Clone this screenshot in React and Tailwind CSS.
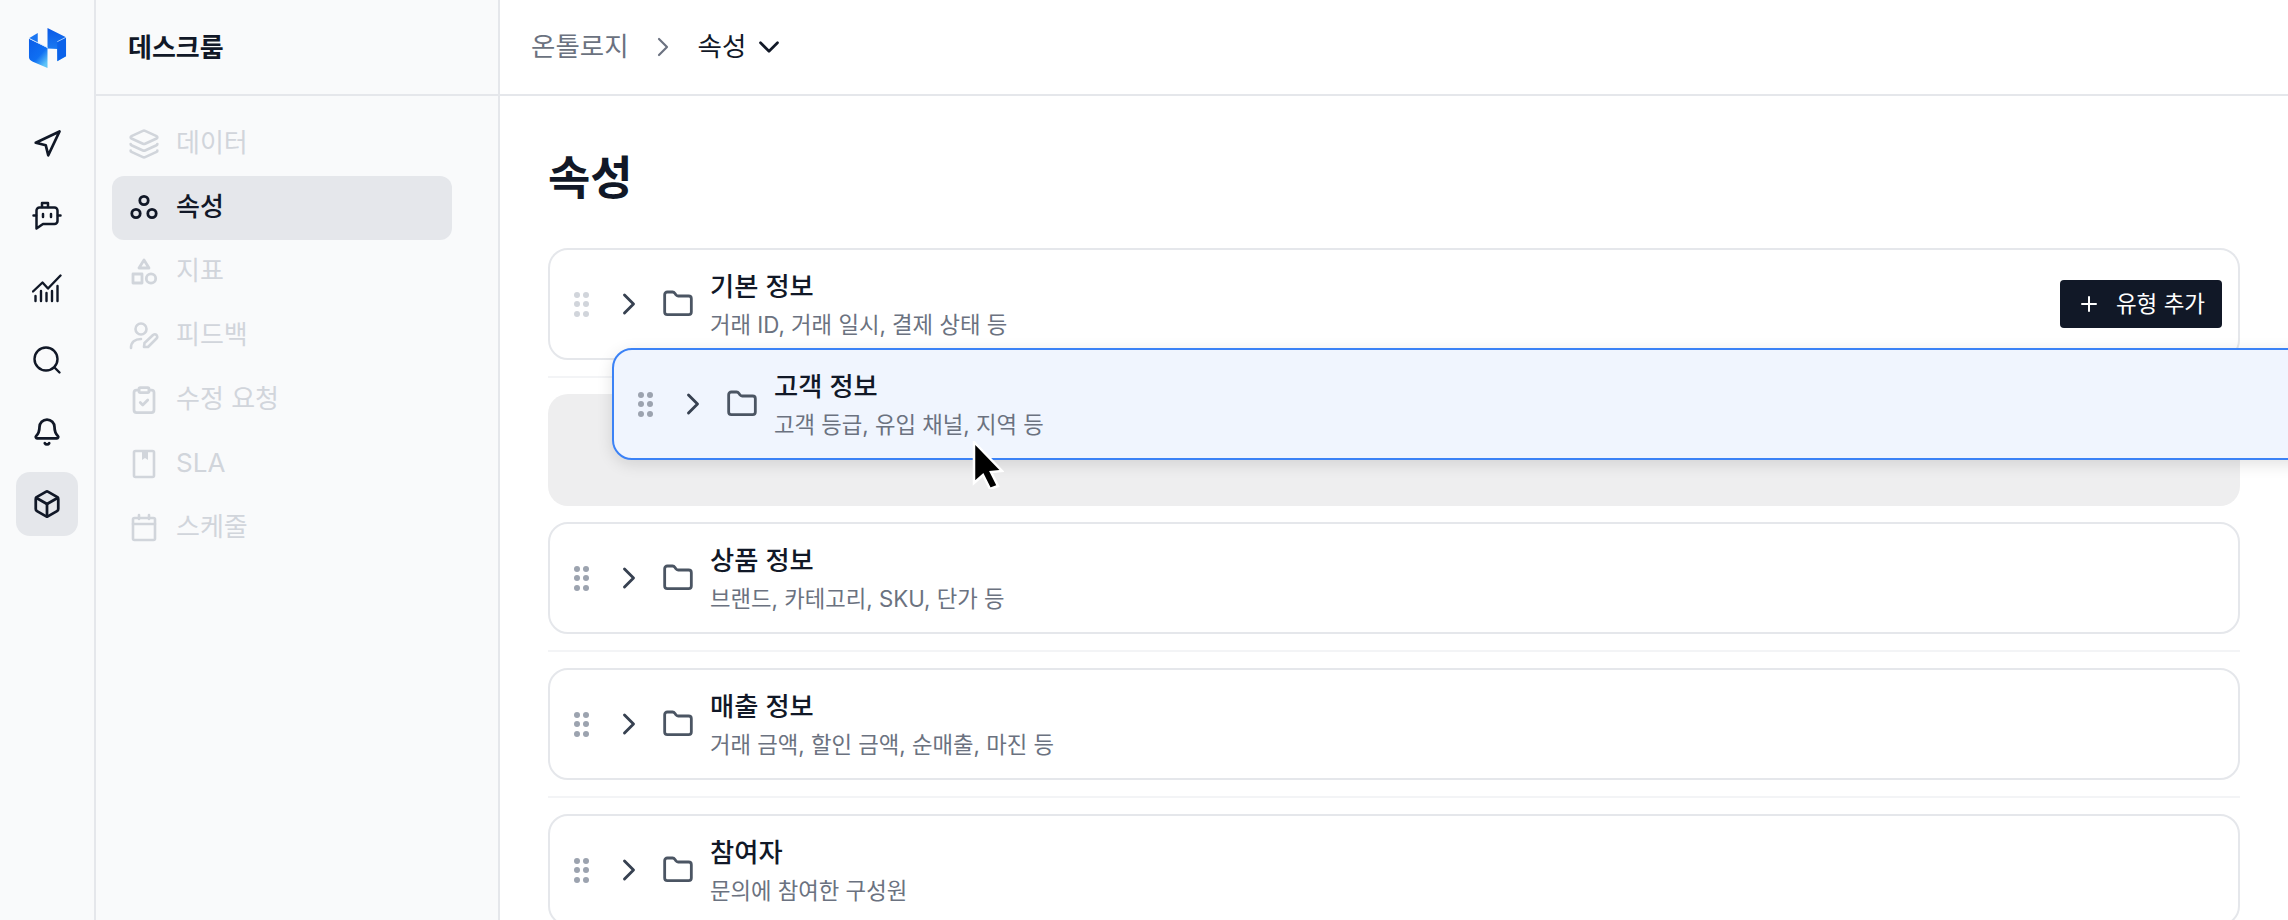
import React from 'react';
import { Navigation, Bell, Box, Layers, ClipboardCheck, ChevronRight, ChevronDown, Folder, Plus } from 'lucide-react';

const FONT = "font-['Inter','Noto_Sans_CJK_KR',sans-serif]";

function Logo() {
  return (
    <svg width="39" height="41" viewBox="0 0 40 42">
      <defs>
        <linearGradient id="logoA" x1="0" y1="0" x2="0.7" y2="1">
          <stop offset="0" stopColor="#0b5ce8" />
          <stop offset="0.65" stopColor="#0f6ff2" />
          <stop offset="1" stopColor="#5fc4f8" />
        </linearGradient>
        <linearGradient id="logoB" x1="0" y1="0" x2="0" y2="1">
          <stop offset="0" stopColor="#0a58e6" />
          <stop offset="0.6" stopColor="#1a78f0" />
          <stop offset="1" stopColor="#7fd4f8" />
        </linearGradient>
      </defs>
      <path d="M1 11 L20 20.5 V41 L5 34.5 Q1 33 1 30 Z" fill="url(#logoA)" />
      <path d="M1 10.5 L10 5 V15 Z" fill="#1b76f2" />
      <path d="M20 0 L39 9.5 V29 L30 34 V21.5 L20 21 Z" fill="url(#logoB)" />
      <path d="M30 14 L39 9.5 V29 L30 34 Z" fill="#0b62ea" />
      <path d="M30 14 L39 9.5 M1 10.5 L20 20" stroke="#cfe6ff" strokeWidth="0.8" fill="none" />
    </svg>
  );
}

function BotIcon() {
  return (
    <svg width="30" height="30" viewBox="0 0 30 30" fill="none" stroke="currentColor" strokeWidth="2.5" strokeLinecap="round" strokeLinejoin="round">
      <path d="M10 6 V2 H16 V6" />
      <path d="M7.5 6.5 H22.5 A3 3 0 0 1 25.5 9.5 V20 A3 3 0 0 1 22.5 23 H11 L4.5 27.5 V9.5 A3 3 0 0 1 7.5 6.5 Z" />
      <path d="M1.5 14.5 H4 M26 14.5 H28.5 M11 13 V16 M19 13 V16" />
    </svg>
  );
}

function ChartIcon() {
  return (
    <svg width="30" height="30" viewBox="0 0 30 30" fill="none" stroke="currentColor" strokeWidth="2.4" strokeLinecap="round" strokeLinejoin="round">
      <path d="M1 18.5 L10.5 9.5 L16 15.5 L28.5 2.5" />
      <path d="M3.5 23 V28 M9 18 V28 M14.5 20 V28 M20 18 V28 M25.5 13 V28" />
    </svg>
  );
}

function SearchIcon() {
  return (
    <svg width="30" height="30" viewBox="0 0 30 30" fill="none" stroke="currentColor" strokeWidth="2.4" strokeLinecap="round">
      <circle cx="14" cy="14" r="11.5" />
      <path d="M23 23 L27.5 27.5" />
    </svg>
  );
}

function NodesIcon() {
  return (
    <svg width="30" height="30" viewBox="0 0 30 30" fill="none" stroke="currentColor" strokeWidth="2.8">
      <circle cx="15" cy="7.5" r="4.2" />
      <circle cx="7" cy="20.5" r="4.2" />
      <circle cx="23" cy="20.5" r="4.2" />
    </svg>
  );
}

function ShapesIcon() {
  return (
    <svg width="30" height="30" viewBox="0 0 30 30" fill="none" stroke="currentColor" strokeWidth="2.8" strokeLinejoin="round">
      <path d="M15 3 L20 11 H10 Z" />
      <rect x="4" y="17" width="9" height="9" />
      <circle cx="22" cy="21.5" r="4.7" />
    </svg>
  );
}

function UserEditIcon() {
  return (
    <svg width="30" height="30" viewBox="0 0 30 30" fill="none" stroke="currentColor" strokeWidth="2.6" strokeLinecap="round" strokeLinejoin="round">
      <circle cx="12" cy="8" r="5.5" />
      <path d="M2 27 C2 21 6 18 12 18" />
      <path d="M15 26 L15.5 22 L24 14 Q26 12.5 27.5 14 Q29 16 27.5 17.5 L19 26 Z" />
    </svg>
  );
}

function BookIcon() {
  return (
    <svg width="30" height="30" viewBox="0 0 30 30" fill="none" stroke="currentColor" strokeWidth="2.6" strokeLinejoin="round">
      <rect x="5" y="2" width="20" height="26" rx="1.5" />
      <path d="M13 2 H19 V11 L16 9 L13 11 Z" fill="currentColor" stroke="none" />
    </svg>
  );
}

function CalendarIcon() {
  return (
    <svg width="30" height="30" viewBox="0 0 30 30" fill="none" stroke="currentColor" strokeWidth="2.6" strokeLinecap="round" strokeLinejoin="round">
      <rect x="4" y="5" width="22" height="22" rx="1.5" />
      <path d="M4 11 H26 M10 2 V6 M20 2 V6" />
    </svg>
  );
}

function Grip({ className }) {
  return (
    <div className={`grid grid-cols-2 gap-x-[3px] gap-y-[3.5px] ${className}`}>
      {[0, 1, 2, 3, 4, 5].map((i) => (
        <span key={i} className="w-[6px] h-[6px] rounded-full bg-current" />
      ))}
    </div>
  );
}

function Cursor() {
  return (
    <svg width="32" height="48" viewBox="0 0 32 48">
      <path d="M2 1 L30 30 L19 31 L26 45 L18 48 L11 34 L2 42 Z" fill="#000" stroke="#fff" strokeWidth="2.5" strokeLinejoin="miter" />
    </svg>
  );
}

const railIcons = [
  { icon: <Navigation size={30} strokeWidth={2.2} /> },
  { icon: <BotIcon /> },
  { icon: <ChartIcon /> },
  { icon: <SearchIcon /> },
  { icon: <Bell size={30} strokeWidth={2.2} /> },
  { icon: <Box size={30} strokeWidth={2.2} />, active: true },
];

const menu = [
  { label: '데이터', icon: <Layers size={32} strokeWidth={2} /> },
  { label: '속성', icon: <NodesIcon />, active: true },
  { label: '지표', icon: <ShapesIcon /> },
  { label: '피드백', icon: <UserEditIcon /> },
  { label: '수정 요청', icon: <ClipboardCheck size={30} strokeWidth={2.2} /> },
  { label: 'SLA', icon: <BookIcon /> },
  { label: '스케줄', icon: <CalendarIcon /> },
];

function Row({ title, desc, titleColor = 'text-[#111827]', grip = 'text-[#9ca3af]' }) {
  return (
    <>
      <Grip className={`${grip} ml-[24px] w-[15px]`} />
      <ChevronRight size={36} strokeWidth={1.9} className="ml-[22px] text-[#374151]" />
      <Folder size={32} strokeWidth={2.1} className="ml-[15px] text-[#4b5563]" />
      <div className="ml-[16px] flex flex-col pt-[1px]">
        <span className={`text-[26.3px] leading-[36px] font-medium ${titleColor}`}>{title}</span>
        <span className="text-[22.3px] leading-[32px] mt-[4px] text-[#6b7280]">{desc}</span>
      </div>
    </>
  );
}

function Card({ title, desc, grip, children }) {
  return (
    <div className="h-[112px] flex items-center bg-white border-2 border-[#e5e7eb] rounded-[20px] shrink-0">
      <Row title={title} desc={desc} grip={grip} />
      {children}
    </div>
  );
}

function Separator() {
  return <div className="h-[2px] my-[16px] bg-[#f3f4f6] shrink-0" />;
}

export default function App() {
  return (
    <div className={`${FONT} w-[2288px] h-[920px] overflow-hidden flex bg-white`}>
      <aside className="w-[96px] shrink-0 bg-[#f9fafb] border-r-2 border-[#e5e7eb] flex flex-col items-center">
        <div className="h-[94px] flex items-center justify-center pt-[2px]"><Logo /></div>
        <div className="flex flex-col items-center gap-[8px] mt-[18px]">
          {railIcons.map((item, i) => (
            <div
              key={i}
              className={`w-[62px] h-[64px] rounded-[14px] flex items-center justify-center text-[#111827] ${item.active ? 'bg-[#e5e7eb]' : ''}`}
            >
              {item.icon}
            </div>
          ))}
        </div>
      </aside>

      <aside className="w-[404px] shrink-0 bg-[#f9fafb] border-r-2 border-[#e5e7eb] flex flex-col">
        <div className="h-[96px] shrink-0 border-b-2 border-[#e5e7eb] flex items-center pl-[32px] text-[26px] font-semibold text-[#111827]">
          데스크룸
        </div>
        <nav className="flex flex-col mt-[16px] pl-[16px] pr-[46px]">
          {menu.map((item) => (
            <div
              key={item.label}
              className={`h-[64px] rounded-[12px] flex items-center pl-[16px] ${item.active ? 'bg-[#e5e7eb] text-[#111827]' : 'text-[#d1d5db]'}`}
            >
              <span className="w-[32px] flex justify-center">{item.icon}</span>
              <span className={`ml-[16px] pb-[3px] text-[26px] ${item.active ? 'font-medium' : ''}`}>{item.label}</span>
            </div>
          ))}
        </nav>
      </aside>

      <main className="flex-1 min-w-0 relative flex flex-col">
        <header className="h-[96px] shrink-0 border-b-2 border-[#e5e7eb] flex items-center pl-[31px]">
          <span className="text-[26.5px] text-[#6b7280]">온톨로지</span>
          <ChevronRight size={32} strokeWidth={1.6} className="ml-[18px] text-[#6b7280]" />
          <span className="ml-[19px] text-[26.5px] text-[#111827]">속성</span>
          <ChevronDown size={34} strokeWidth={1.9} className="ml-[6px] text-[#111827]" />
        </header>

        <div className="flex flex-col pl-[48px] pr-[48px]">
          <h1 className="mt-[57px] h-[48px] leading-[48px] text-[46px] font-bold text-[#111827]">속성</h1>

          <div className="mt-[47px] flex flex-col">
            <Card title="기본 정보" desc="거래 ID, 거래 일시, 결제 상태 등" grip="text-[#d1d5db]">
              <button className="ml-auto mr-[16px] w-[162px] h-[48px] rounded-[4px] bg-[#111827] text-white flex items-center justify-center gap-[15px] text-[22.5px]">
                <Plus size={24} strokeWidth={2} />
                유형 추가
              </button>
            </Card>
            <Separator />
            <div className="h-[112px] shrink-0 rounded-[20px] bg-[#eeeeef] mb-[16px]" />
            <Card title="상품 정보" desc="브랜드, 카테고리, SKU, 단가 등" />
            <Separator />
            <Card title="매출 정보" desc="거래 금액, 할인 금액, 순매출, 마진 등" />
            <Separator />
            <Card title="참여자" desc="문의에 참여한 구성원" />
          </div>
        </div>

        <div className="absolute left-[112px] top-[348px] w-[1800px] h-[112px] flex items-center bg-[#f0f5fe] border-2 border-[#3b82f6] rounded-[20px] shadow-[0_4px_16px_rgba(0,0,0,0.12)]">
          <Row title="고객 정보" desc="고객 등급, 유입 채널, 지역 등" />
        </div>
        <div className="absolute left-[472px] top-[441px]"><Cursor /></div>
      </main>
    </div>
  );
}
